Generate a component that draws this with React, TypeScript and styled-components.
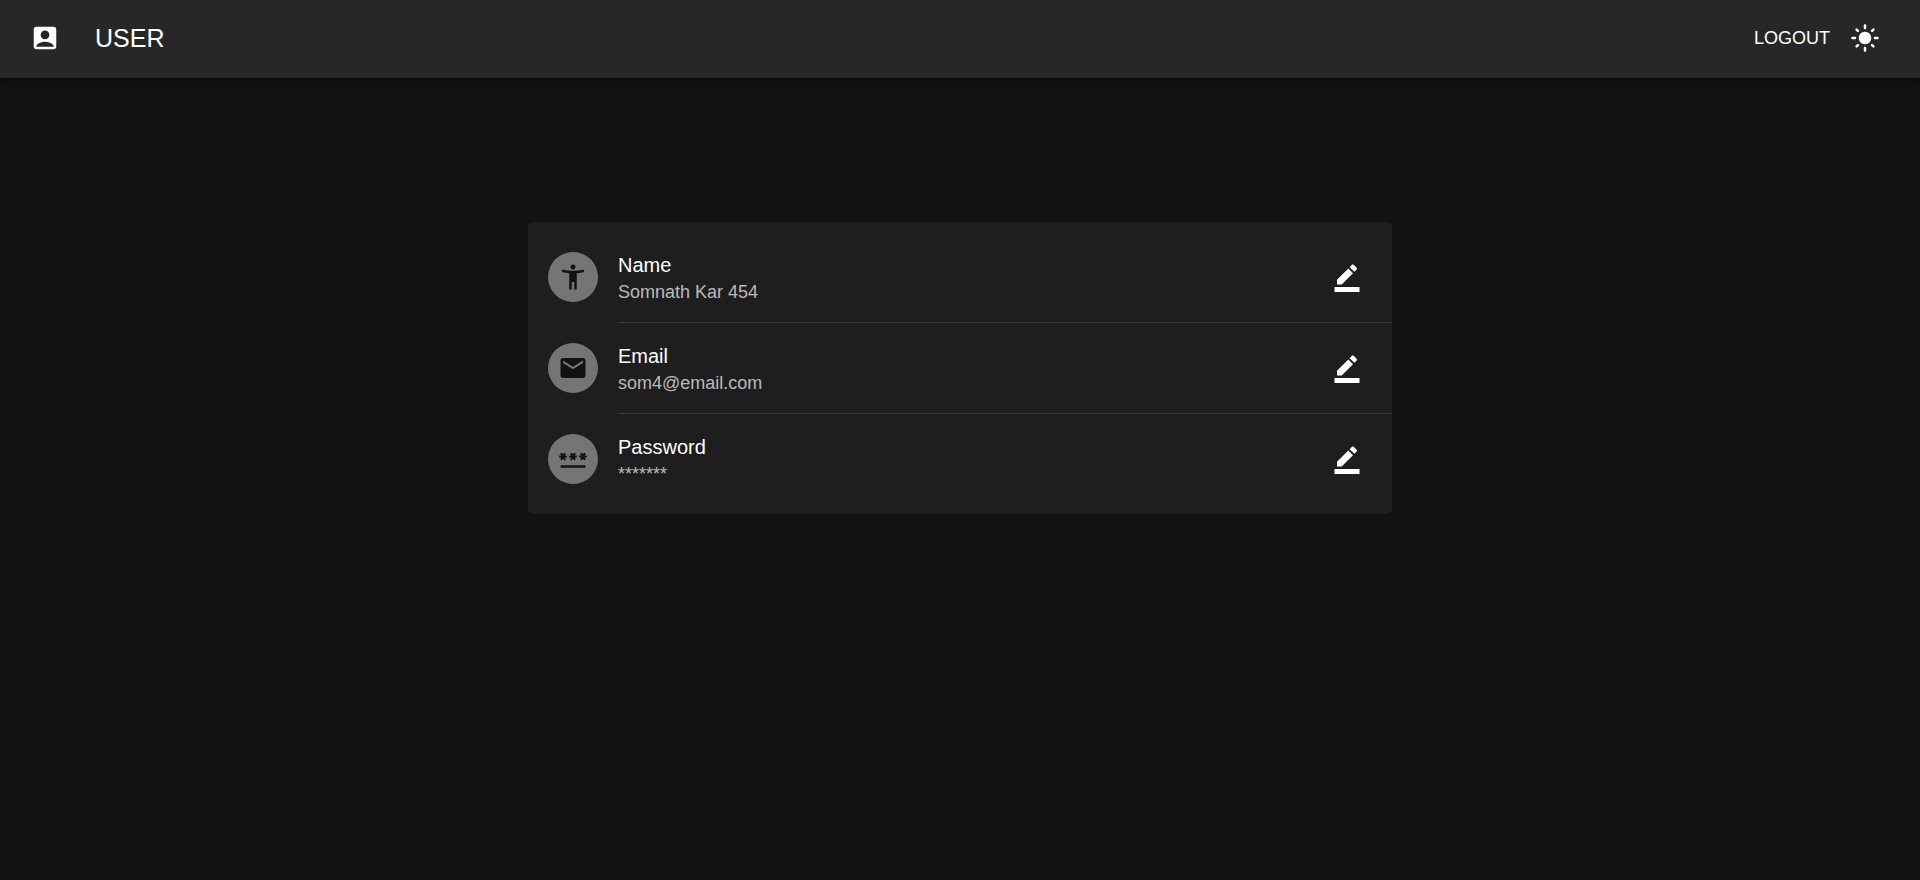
import React from "react";
import styled, { createGlobalStyle } from "styled-components";
import { MdAccessibilityNew, MdEmail, MdLightMode } from "react-icons/md";

const GlobalStyle = createGlobalStyle`
  *, *::before, *::after { box-sizing: border-box; }
  body {
    margin: 0;
    background: #121212;
    color: #fff;
    font-family: "Liberation Sans", Arial, Helvetica, sans-serif;
    font-size: 20px;
    line-height: 30px;
  }
`;

const AppBar = styled.header`
  display: flex;
  align-items: center;
  padding: 13px 30px 15px 20px;
  background: #272727;
  box-shadow:
    0 2px 5px -1px rgba(0, 0, 0, 0.2),
    0 5px 6px 0 rgba(0, 0, 0, 0.14),
    0 1px 12px 0 rgba(0, 0, 0, 0.12);
`;

const IconButton = styled.button`
  display: flex;
  padding: 10px;
  border: 0;
  border-radius: 50%;
  background: transparent;
  color: inherit;
  font-size: 30px;
  cursor: pointer;
`;

const Title = styled.h1`
  flex: 1;
  margin: 0 0 0 25px;
  font-size: 25px;
  font-weight: 400;
  line-height: 40px;
`;

const TextButton = styled.button`
  padding: 8px 10px;
  border: 0;
  border-radius: 5px;
  background: transparent;
  color: inherit;
  font: inherit;
  font-size: 18px;
  text-transform: uppercase;
  cursor: pointer;
`;

const Card = styled.main`
  width: 45%;
  margin: 144px auto 0;
  border-radius: 5px;
  background: #1e1e1e;
  box-shadow:
    0 2px 1px -1px rgba(0, 0, 0, 0.2),
    0 1px 1px 0 rgba(0, 0, 0, 0.14),
    0 1px 4px 0 rgba(0, 0, 0, 0.12);
`;

const List = styled.ul`
  margin: 0;
  padding: 10px 0;
  list-style: none;
`;

const Row = styled.li`
  display: flex;
  align-items: center;
  gap: 20px;
  height: 90px;
  padding: 0 20px;
`;

const Divider = styled.li`
  height: 1px;
  margin-left: 90px;
  background: #393939;
`;

const Avatar = styled.span`
  display: flex;
  align-items: center;
  justify-content: center;
  width: 50px;
  height: 50px;
  border-radius: 50%;
  background: #757575;
  color: #121212;
  font-size: 30px;
`;

const Details = styled.div`
  flex: 1;
  min-width: 0;
`;

const Label = styled.div`
  line-height: 30px;
`;

const Value = styled.div`
  color: rgba(255, 255, 255, 0.7);
  font-size: 18px;
  line-height: 25px;
`;

const Glyph = styled.svg.attrs({ viewBox: "0 0 24 24", "aria-hidden": true })`
  width: 1em;
  height: 1em;
  fill: currentColor;
`;

const AccountIcon = () => (
  <Glyph>
    <path d="M19 3H5c-1.1 0-2 .9-2 2v14c0 1.1.9 2 2 2h14c1.1 0 2-.9 2-2V5c0-1.1-.9-2-2-2zm-7 3c1.93 0 3.5 1.57 3.5 3.5S13.930 13 12 13s-3.500-1.570-3.500-3.500S10.070 6 12 6zm7 13H5v-.23c0-.62.28-1.2.76-1.58C7.470 15.820 9.640 15 12 15s4.530.82 6.240 2.190c.48.38.76.97.76 1.580V19z" />
  </Glyph>
);

const EditIcon = () => (
  <Glyph>
    <path d="M22 24H2v-4h20v4zM13.06 5.190l3.750 3.750L7.750 18H4v-3.750l9.060-9.060zm4.820 2.680-3.750-3.750 1.830-1.830c.39-.39 1.020-.39 1.410 0l2.340 2.340c.39.39.39 1.020 0 1.410l-1.830 1.830z" />
  </Glyph>
);

const asteriskCentres = [4, 12, 20];

const PasswordIcon = () => (
  <Glyph>
    <rect x="2" y="17" width="20" height="2" rx="0.4" />
    {asteriskCentres.map((x) => (
      <g key={x} transform={`translate(${x} 9.97)`}>
        {[0, 60, 120].map((angle) => (
          <rect
            key={angle}
            x="-3.1"
            y="-0.85"
            width="6.2"
            height="1.7"
            rx="0.3"
            transform={`rotate(${angle})`}
          />
        ))}
      </g>
    ))}
  </Glyph>
);

interface Field {
  label: string;
  value: string;
  icon: React.ComponentType;
}

const fields: Field[] = [
  { label: "Name", value: "Somnath Kar 454", icon: MdAccessibilityNew },
  { label: "Email", value: "som4@email.com", icon: MdEmail },
  { label: "Password", value: "*******", icon: PasswordIcon },
];

export default function App() {
  return (
    <>
      <GlobalStyle />
      <AppBar>
        <IconButton type="button" aria-label="Account">
          <AccountIcon />
        </IconButton>
        <Title>USER</Title>
        <TextButton type="button">Logout</TextButton>
        <IconButton type="button" aria-label="Toggle light mode">
          <MdLightMode />
        </IconButton>
      </AppBar>
      <Card>
        <List>
          {fields.map(({ label, value, icon: Icon }, index) => (
            <React.Fragment key={label}>
              {index > 0 && <Divider role="separator" />}
              <Row>
                <Avatar>
                  <Icon />
                </Avatar>
                <Details>
                  <Label>{label}</Label>
                  <Value>{value}</Value>
                </Details>
                <IconButton type="button" aria-label={`Edit ${label}`}>
                  <EditIcon />
                </IconButton>
              </Row>
            </React.Fragment>
          ))}
        </List>
      </Card>
    </>
  );
}
